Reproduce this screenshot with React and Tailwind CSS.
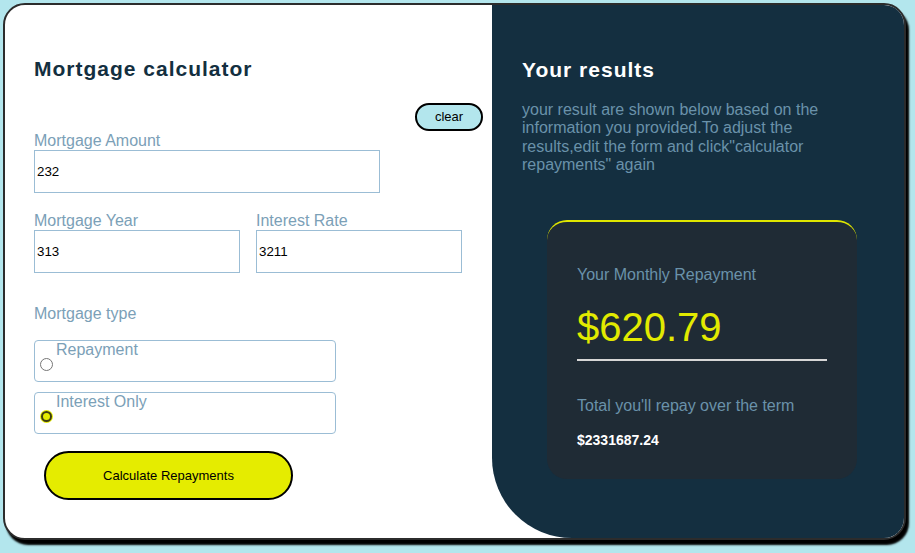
import { useState } from "react";

const Radio = ({ checked }) =>
  checked ? (
    <span className="mt-[17px] ml-[5px] w-[13px] h-[13px] shrink-0 rounded-full bg-[#e5ec00] flex items-center justify-center">
      <span className="w-[11px] h-[11px] rounded-full border-2 border-[#3d3d14] bg-[#e5ec00]" />
    </span>
  ) : (
    <span className="mt-[17px] ml-[5px] w-[13px] h-[13px] shrink-0 rounded-full border border-[#767676] bg-white" />
  );

const App = () => {
  const [amount, setAmount] = useState("232");
  const [years, setYears] = useState("313");
  const [rate, setRate] = useState("3211");
  const [type, setType] = useState("interest");

  return (
    <div className="min-h-[553px] bg-[#b3e6ed] p-[3px] font-['Liberation_Sans',Arial,sans-serif]">
      <div className="w-[903px] h-[537px] rounded-[22px] border-2 border-[#2c2c2c] bg-white shadow-[3px_5px_2px_#000] overflow-hidden flex">
        {/* form side */}
        <div className="w-[487px] shrink-0 pl-[29px] pt-[52px] flex flex-col">
          <h1 className="text-[21px] leading-[24px] font-bold tracking-[1px] text-[#132f40]">Mortgage calculator</h1>

          <div className="flex justify-end pr-[9px] mt-[22px]">
            <button className="h-[28px] w-[68px] rounded-full border-2 border-black bg-[#b3e6ed] text-[13px] text-black">clear</button>
          </div>

          <label htmlFor="amount" className="mt-[1px] text-[16px] leading-[18px] text-[#7ba0b7]">Mortgage Amount</label>
          <input id="amount" type="text" value={amount} onChange={(e) => setAmount(e.target.value)} className="w-[346px] h-[43px] border border-[#9bbdd5] px-[2px] text-[13.33px] text-black outline-none" />

          <div className="flex gap-[16px] mt-[19px]">
            <div className="flex flex-col">
              <label htmlFor="years" className="text-[16px] leading-[18px] text-[#7ba0b7]">Mortgage Year</label>
              <input id="years" type="text" value={years} onChange={(e) => setYears(e.target.value)} className="w-[206px] h-[43px] border border-[#9bbdd5] px-[2px] text-[13.33px] text-black outline-none" />
            </div>
            <div className="flex flex-col">
              <label htmlFor="rate" className="text-[16px] leading-[18px] text-[#7ba0b7]">Interest Rate</label>
              <input id="rate" type="text" value={rate} onChange={(e) => setRate(e.target.value)} className="w-[206px] h-[43px] border border-[#9bbdd5] px-[2px] text-[13.33px] text-black outline-none" />
            </div>
          </div>

          <p className="mt-[32px] text-[16px] leading-[18px] text-[#7ba0b7]">Mortgage type</p>

          <div onClick={() => setType("repayment")} className="mt-[17px] w-[302px] h-[42px] rounded-[4px] border border-[#9bbdd5] flex items-start cursor-pointer">
            <Radio checked={type === "repayment"} />
            <span className="ml-[3px] text-[16px] leading-[18px] text-[#7ba0b7]">Repayment</span>
          </div>
          <div onClick={() => setType("interest")} className="mt-[10px] w-[302px] h-[42px] rounded-[4px] border border-[#9bbdd5] flex items-start cursor-pointer">
            <Radio checked={type === "interest"} />
            <span className="ml-[3px] text-[16px] leading-[18px] text-[#7ba0b7]">Interest Only</span>
          </div>

          <button className="mt-[17px] ml-[10px] w-[249px] h-[49px] rounded-full border-2 border-black bg-[#e5ec00] text-[13px] text-black">
            Calculate Repayments
          </button>
        </div>

        {/* results side */}
        <div className="flex-1 bg-[#142f40] rounded-bl-[80px] pl-[30px] pt-[53px]">
          <h2 className="text-[21px] leading-[24px] font-bold tracking-[1px] text-white">Your results</h2>
          <p className="mt-[19px] w-[305px] text-[16px] leading-[18.4px] text-[#6a92aa]">
            your result are shown below based on the information you provided.To adjust the results,edit the form and click"calculator repayments" again
          </p>

          <div className="mt-[45px] ml-[25px] w-[310px] h-[259px] rounded-[20px] border-t-2 border-[#dfe600] bg-[#1f2b35] pl-[30px] pt-[44px]">
            <p className="text-[16px] leading-[18px] text-[#6a92aa]">Your Monthly Repayment</p>
            <p className="mt-[20px] text-[40px] leading-[46px] text-[#e2ea00]">$620.79</p>
            <div className="mt-[9px] w-[250px] h-[2px] bg-[#d6d6d6]" />
            <p className="mt-[36px] text-[16px] leading-[18px] text-[#6a92aa]">Total you'll repay over the term</p>
            <p className="mt-[17px] text-[14px] leading-[16px] font-bold text-white">$2331687.24</p>
          </div>
        </div>
      </div>
    </div>
  );
};

export default App;
